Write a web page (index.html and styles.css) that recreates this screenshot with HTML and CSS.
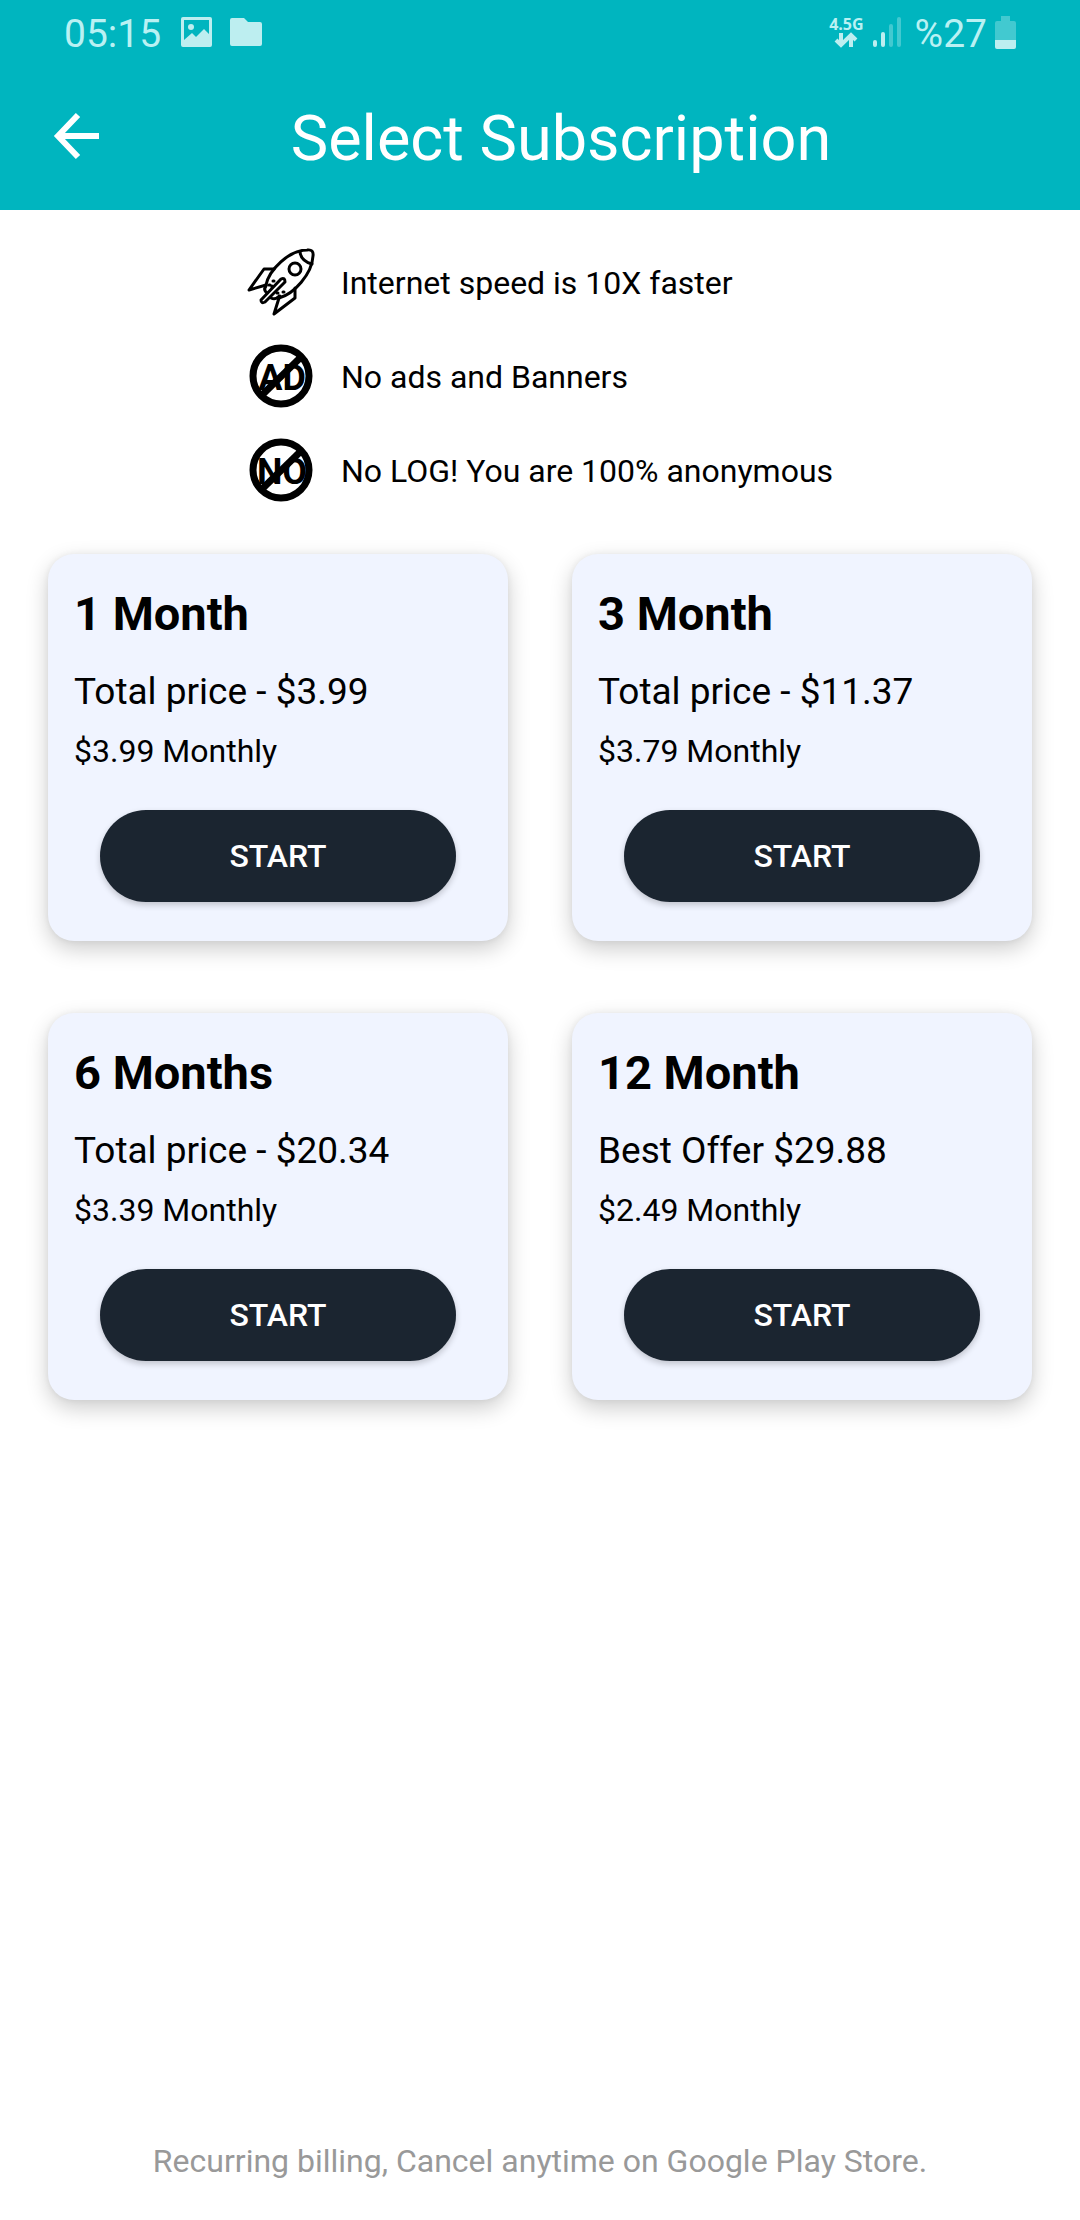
FILE: index.html
```html
<!DOCTYPE html>
<html lang="en">

<head>
    <meta charset="UTF-8">
    <meta name="viewport" content="width=device-width, initial-scale=1">
    <title>Select Subscription</title>
    <link rel="stylesheet" href="styles.css">
</head>

<body>
    <header class="header">
        <div class="status-bar">
            <div class="status-left">
                <span class="status-text">05:15</span>
                <svg class="icon-image" width="31" height="30" viewBox="0 0 31 30">
                    <path fill-rule="evenodd" d="M2 0h27a2 2 0 0 1 2 2v26a2 2 0 0 1-2 2H2a2 2 0 0 1-2-2V2a2 2 0 0 1 2-2zM3 3v20l8-7 4 4 8-8 5 5V3z" />
                    <circle cx="10" cy="10" r="3" />
                </svg>
                <svg class="icon-folder" width="32" height="28" viewBox="0 0 32 28">
                    <path d="M2 0h12l4 4h12a2 2 0 0 1 2 2v20a2 2 0 0 1-2 2H2a2 2 0 0 1-2-2V2a2 2 0 0 1 2-2z" />
                </svg>
            </div>
            <div class="status-right">
                <div class="network">
                    <span class="network-type">4.5G</span>
                    <svg width="24" height="16" viewBox="0 0 24 16">
                        <path class="stroke" d="M7 1v11M2 8l5 5 5-5M17 15V4M12 8l5-5 5 5" />
                    </svg>
                </div>
                <svg class="icon-signal" width="28" height="30" viewBox="0 0 28 30">
                    <rect x="0" y="23" width="4" height="7" rx="2" />
                    <rect x="8" y="15" width="4" height="15" rx="2" />
                    <rect class="dim" x="16" y="7" width="4" height="23" rx="2" />
                    <rect class="dim" x="24" y="0" width="4" height="30" rx="2" />
                </svg>
                <span class="status-text">%27</span>
                <svg class="icon-battery" width="21" height="33" viewBox="0 0 21 33">
                    <path class="dim" d="M6 0h9v5h4a2 2 0 0 1 2 2v17H0V7a2 2 0 0 1 2-2h4z" />
                    <path d="M0 24h21v7a2 2 0 0 1-2 2H2a2 2 0 0 1-2-2z" />
                </svg>
            </div>
        </div>
        <div class="title-bar">
            <button class="back-btn" type="button" aria-label="Back">
                <svg width="48" height="48" viewBox="0 0 48 48">
                    <path d="M47 24H6M26 3L6 24l20 21" />
                </svg>
            </button>
            <h1 class="title">Select Subscription</h1>
        </div>
    </header>

    <main class="main">
        <ul class="feature-list">
            <li>
                <svg class="feature-icon" viewBox="0 0 68 68">
                    <g class="rocket">
                        <path d="M19 37C22 22 42 2 60 2q7-1 6 6C65 26 47 46 32 50" />
                        <path d="M53 4q1 9 12 12" />
                        <circle cx="48" cy="21" r="6" />
                        <path d="M27 21H17L2 42l17-5M48 40v10L27 66l5-16" />
                        <path d="M14 52l20-21q4-2 4 3L18 54q-4 2-4-2z" />
                        <path d="M19 38q-3 4 1 7M31 49q-3 3-7 1M22 37h1M26 33h1M25 38v1M32 48h1M36 44h1M30 45h1" />
                    </g>
                </svg>
                <span>Internet speed is 10X faster</span>
            </li>
            <li>
                <svg class="feature-icon" viewBox="0 0 68 68">
                    <text x="35" y="48">AD</text>
                    <circle class="ban" cx="34" cy="34" r="28" />
                    <path class="ban" d="M14 54l40-39" />
                </svg>
                <span>No ads and Banners</span>
            </li>
            <li>
                <svg class="feature-icon" viewBox="0 0 68 68">
                    <text x="35" y="48">NO</text>
                    <circle class="ban" cx="34" cy="34" r="28" />
                    <path class="ban" d="M14 54l40-39" />
                </svg>
                <span>No LOG! You are 100% anonymous</span>
            </li>
        </ul>

        <div class="plans">
            <section class="card">
                <h2>1 Month</h2>
                <p class="total">Total price - $3.99</p>
                <p class="monthly">$3.99 Monthly</p>
                <button class="start-btn" type="button">START</button>
            </section>
            <section class="card">
                <h2>3 Month</h2>
                <p class="total">Total price - $11.37</p>
                <p class="monthly">$3.79 Monthly</p>
                <button class="start-btn" type="button">START</button>
            </section>
            <section class="card">
                <h2>6 Months</h2>
                <p class="total">Total price - $20.34</p>
                <p class="monthly">$3.39 Monthly</p>
                <button class="start-btn" type="button">START</button>
            </section>
            <section class="card">
                <h2>12 Month</h2>
                <p class="total">Best Offer $29.88</p>
                <p class="monthly">$2.49 Monthly</p>
                <button class="start-btn" type="button">START</button>
            </section>
        </div>
    </main>

    <footer class="footer">Recurring billing, Cancel anytime on Google Play Store.</footer>
</body>

</html>
```
FILE: styles.css
```css
* {
    margin: 0;
    padding: 0;
    box-sizing: border-box;
    list-style: none;
}

body {
    display: flex;
    flex-direction: column;
    min-height: 100vh;
    background-color: #fff;
    color: #000;
    font-family: Roboto, "Liberation Sans", sans-serif;
}

svg {
    display: block;
    flex: none;
}

/* header */
.header {
    padding-bottom: 2px;
    background-color: #00b5bf;
    color: #fff;
}

.status-bar {
    display: flex;
    justify-content: space-between;
    height: 64px;
    padding: 0 64px;
    color: #b9f1f3;
    fill: #bdeef0;
}

.status-left,
.status-right {
    display: flex;
    align-items: center;
}

.status-text {
    padding-top: 4px;
    font-size: 39px;
    line-height: 46px;
}

.icon-image {
    margin-left: 20px;
}

.icon-folder {
    margin-left: 18px;
}

.network {
    display: flex;
    flex-direction: column;
    align-items: center;
}

.network-type {
    font: bold 16px/16px "Open Sans", sans-serif;
}

.icon-signal {
    margin: 0 14px 0 9px;
}

.icon-battery {
    margin-left: 8px;
}

.dim {
    opacity: .35;
}

.stroke {
    fill: none;
    stroke: #bdeef0;
    stroke-width: 4;
}

.title-bar {
    display: flex;
    align-items: center;
    height: 144px;
    padding: 0 52px;
}

.back-btn {
    border: 0 none;
    background: none;
    cursor: pointer;
}

.back-btn path {
    fill: none;
    stroke: #fff;
    stroke-width: 6;
}

.title {
    flex: 1;
    padding: 6px 6px 0 0;
    font-size: 63px;
    font-weight: 400;
    line-height: 74px;
    text-align: center;
}

/* features */
.main {
    flex: 1;
}

.feature-list {
    display: flex;
    flex-direction: column;
    gap: 26px;
    width: max-content;
    margin: 0 auto;
    padding: 38px 0 50px;
    font-size: 32px;
    line-height: 38px;
}

.feature-list li {
    display: flex;
    align-items: center;
    gap: 26px;
}

.feature-list span {
    padding-top: 2px;
}

.feature-icon {
    width: 68px;
    height: 68px;
}

.rocket {
    fill: none;
    stroke: #000;
    stroke-width: 3;
    stroke-linecap: round;
    stroke-linejoin: round;
}

.ban {
    fill: none;
    stroke: #000;
    stroke-width: 7;
}

.feature-icon text {
    font-size: 36px;
    font-weight: 700;
    text-anchor: middle;
}

/* plans */
.plans {
    display: grid;
    grid-template-columns: 1fr 1fr;
    gap: 72px 64px;
    padding: 0 48px;
}

.card {
    padding: 32px 26px 39px;
    border-radius: 26px;
    background-color: #f0f4ff;
    box-shadow: 0 8px 22px rgba(0, 0, 0, .2), 0 0 6px rgba(0, 0, 0, .06);
}

.card h2 {
    font-size: 47px;
    line-height: 56px;
}

.total {
    margin-top: 28px;
    font-size: 37px;
    line-height: 44px;
}

.monthly {
    margin-top: 18px;
    font-size: 32px;
    line-height: 38px;
}

.start-btn {
    display: block;
    width: calc(100% - 52px);
    height: 92px;
    margin: 40px auto 0;
    border: 0 none;
    border-radius: 46px;
    background-color: #1b2530;
    box-shadow: 0 3px 6px rgba(0, 0, 0, .2);
    color: #fff;
    font: 500 32px Roboto, "Liberation Sans", sans-serif;
    cursor: pointer;
}

.footer {
    padding: 20px 0 40px;
    color: #999;
    font-size: 32px;
    line-height: 38px;
    text-align: center;
}
```
